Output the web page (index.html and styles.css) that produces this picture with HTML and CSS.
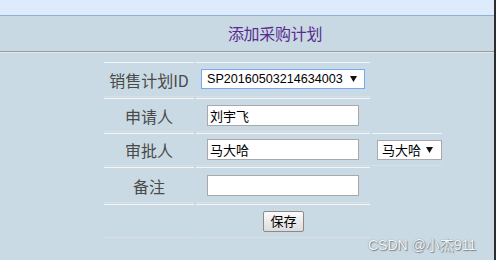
FILE: index.html
```html
<!DOCTYPE html>
<html lang="zh">
<head>
<meta charset="utf-8">
<link rel="stylesheet" href="styles.css">
</head>
<body>
<div class="page">
  <div class="topbar"></div>
  <div class="titlebar"><span class="title">添加采购计划</span></div>
  <div class="content">
    <div class="form">
      <div class="cell label r1">销售计划ID</div>
      <div class="cell field r1">
        <div class="select select-main"><span>SP20160503214634003</span><svg class="arrow" width="7" height="6" viewBox="0 0 7 6"><path d="M0 0H7L3.5 6Z" fill="#111"/></svg></div>
      </div>
      <div class="blank"></div>

      <div class="cell label r2">申请人</div>
      <div class="cell field r2"><div class="input">刘宇飞</div></div>
      <div class="blank"></div>

      <div class="cell label r3">审批人</div>
      <div class="cell field r3"><div class="input">马大哈</div></div>
      <div class="cell extra r3"><div class="select select-small"><span>马大哈</span><svg class="arrow" width="7" height="6" viewBox="0 0 7 6"><path d="M0 0H7L3.5 6Z" fill="#111"/></svg></div></div>

      <div class="cell label r4">备注</div>
      <div class="cell field r4"><div class="input"></div></div>
      <div class="blank"></div>

      <div class="cell label r5"></div>
      <div class="cell field center r5"><button class="btn">保存</button></div>
      <div class="blank"></div>
    </div>
  </div>
  <div class="edge"></div>
  <div class="watermark">CSDN @小杰911</div>
</div>
</body>
</html>
```

FILE: styles.css
```css
html, body {
  margin: 0;
  padding: 0;
}
body {
  background: #c9dae4;
  font-family: "Noto Sans CJK SC", "Liberation Sans", sans-serif;
}
.page {
  position: relative;
  width: 496px;
  height: 260px;
  overflow: hidden;
  background: #c9dae4;
}
.topbar {
  height: 15px;
  background: #deebfc;
  border-bottom: 1px solid #8fb1d9;
}
.titlebar {
  height: 34px;
  background: #c8d9e3;
  border-bottom: 1px solid #9a9a9a;
  box-shadow: 0 1px 0 #e4e8ea;
  display: flex;
  align-items: center;
  justify-content: center;
  padding-left: 54px;
  padding-bottom: 1px;
  box-sizing: content-box;
}
.title {
  font-size: 16px;
  line-height: 18px;
  color: #5a2b90;
  letter-spacing: -0.3px;
}
.content {
  padding-top: 10px;
  padding-left: 104px;
}
.form {
  display: grid;
  grid-template-columns: 90px 174px 70px;
  grid-template-rows: 35px 34px 33px 36px 34px;
  column-gap: 2px;
  row-gap: 1px;
}
.cell {
  box-sizing: border-box;
  border-top: 1px solid #f4f7f9;
  border-bottom: 1px solid #dcdfe1;
  display: flex;
  align-items: center;
}
.label {
  justify-content: center;
  font-size: 16px;
  color: #4a4a4a;
  padding-top: 1px;
}
.field {
  padding-left: 11px;
}
.field.r1 {
  padding-left: 5px;
}
.extra {
  padding-left: 5px;
}
.center {
  justify-content: center;
  padding-left: 0;
}
.input {
  box-sizing: border-box;
  width: 152px;
  height: 21px;
  background: #fff;
  border: 1px solid #a9a9a9;
  font-size: 13px;
  line-height: 19px;
  padding-left: 2px;
  color: #000;
}
.select {
  box-sizing: border-box;
  display: flex;
  align-items: center;
  justify-content: space-between;
  background: #fff;
  color: #000;
}
.select-main {
  width: 164px;
  height: 20px;
  border: 1px solid #7aa7e6;
  box-shadow: 0 0 0 1px #c5daf5;
  font-family: "Liberation Sans", Arial, sans-serif;
  font-size: 12.6px;
  padding: 0 7px 0 5px;
  margin-top: -2px;
}
.select-small {
  width: 66px;
  height: 20px;
  border: 1px solid #a9a9a9;
  font-size: 13px;
  padding: 0 8px 0 4px;
}
.arrow {
  display: block;
  flex: none;
}
.btn {
  box-sizing: border-box;
  width: 41px;
  height: 21px;
  margin-left: 1px;
  padding: 0;
  border: 1px solid #8a8a8a;
  border-radius: 2px;
  background: linear-gradient(#fbfbfb, #dcdcdc);
  font-family: "Noto Sans CJK SC", sans-serif;
  font-size: 13px;
  line-height: 18px;
  color: #000;
}
.edge {
  position: absolute;
  top: 0;
  right: 0;
  width: 2px;
  height: 260px;
  background: #2d2d2d;
}
.watermark {
  position: absolute;
  left: 368px;
  top: 234px;
  font-family: "Liberation Sans", "Noto Sans CJK SC", sans-serif;
  font-size: 14px;
  color: #f4f6f8;
  text-shadow: 0 0 1px #6f7a80, 1px 1px 1px #7a858b;
}
```
